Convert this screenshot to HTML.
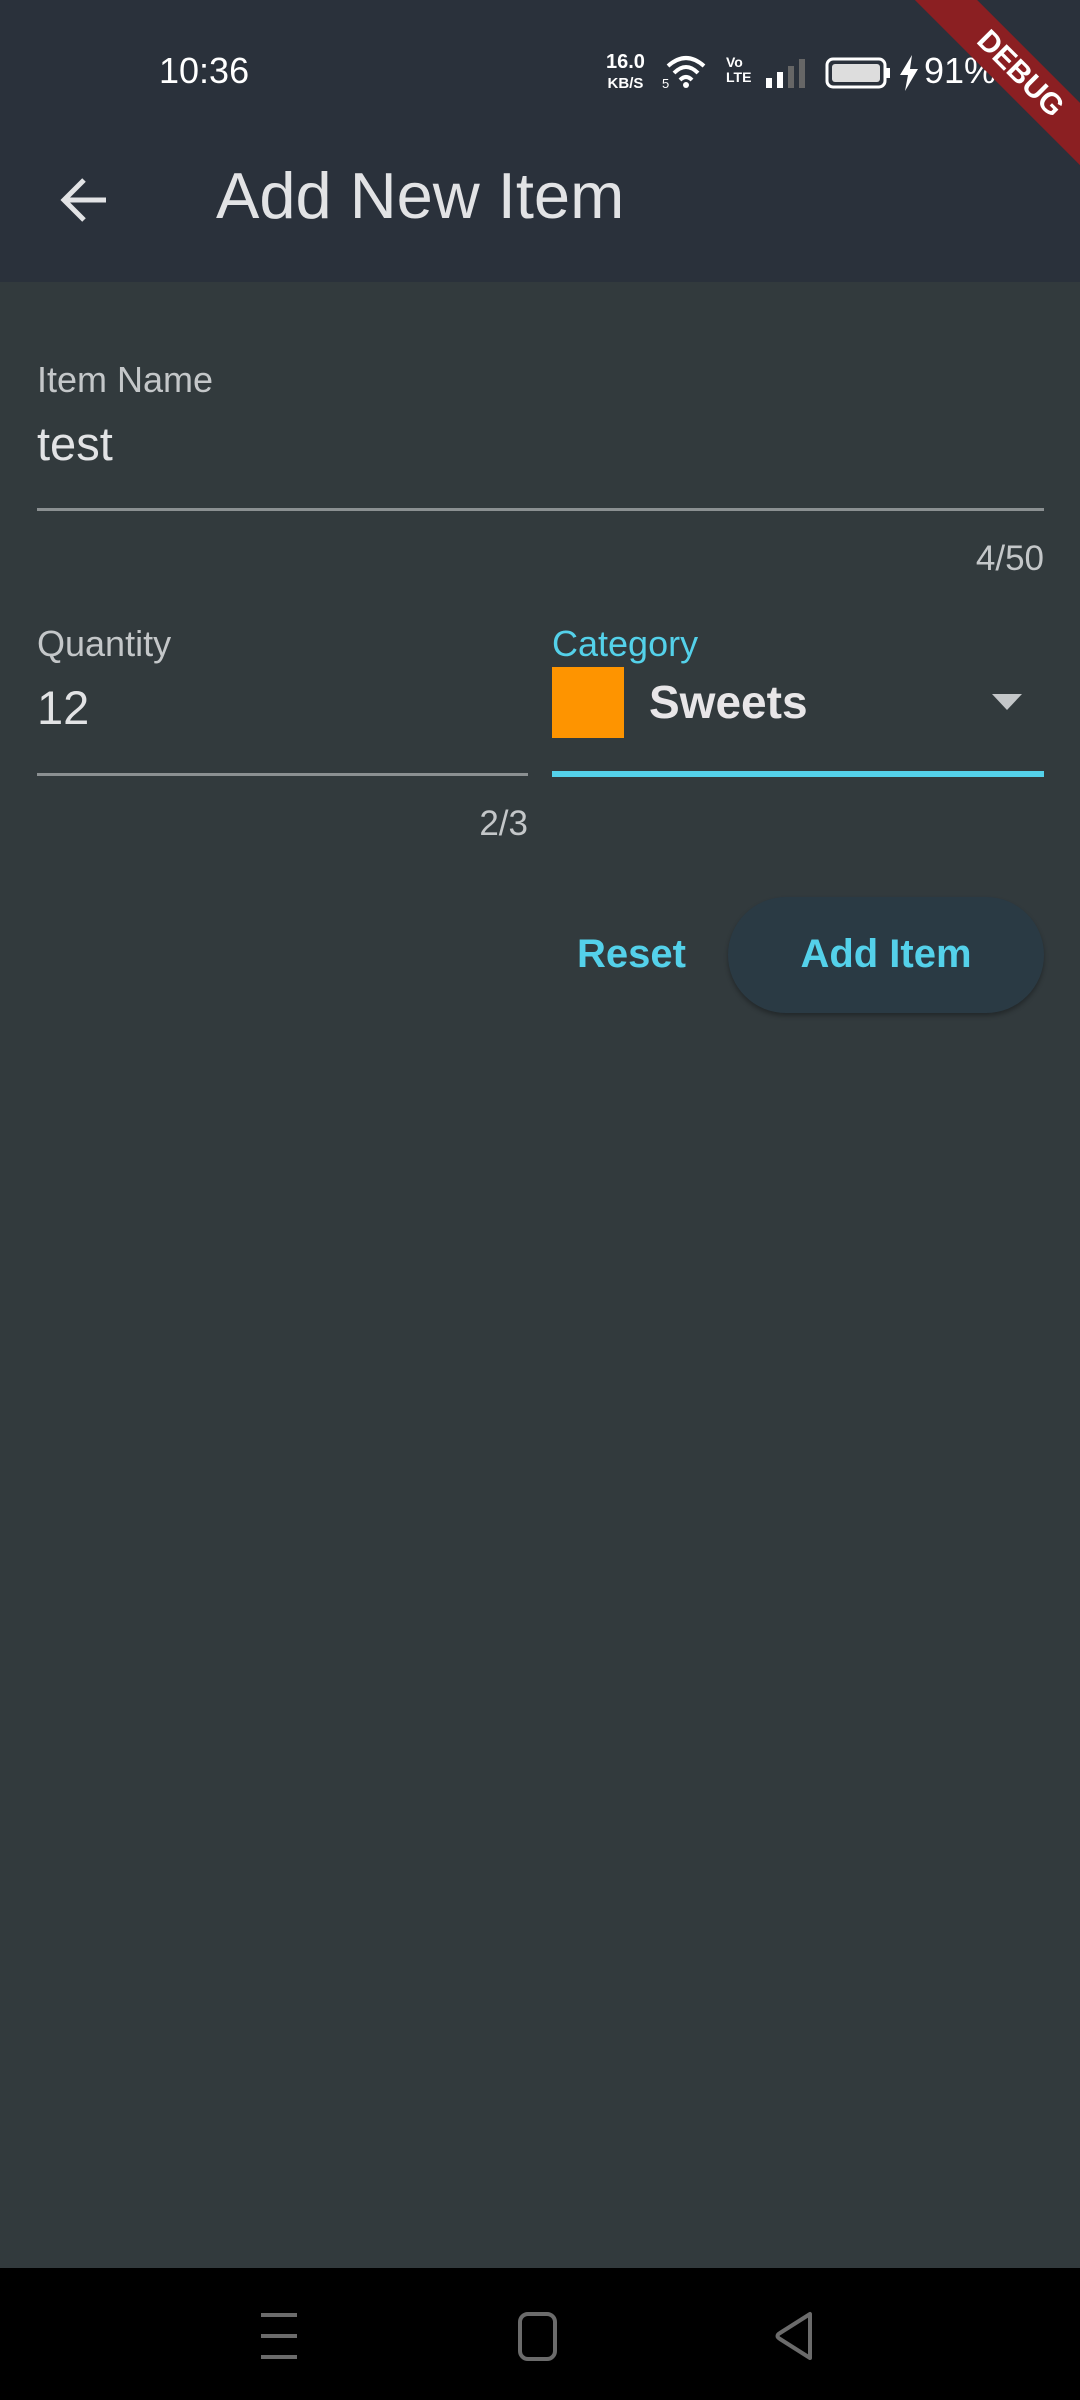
<!DOCTYPE html>
<html><head><meta charset="utf-8"><style>
*{margin:0;padding:0;box-sizing:border-box}
body{width:1080px;height:2400px;overflow:hidden;background:#323a3d;font-family:"Liberation Sans",sans-serif;position:relative;color:#e2e3e5}
.abs{position:absolute;white-space:nowrap}
#top{position:absolute;left:0;top:0;width:1080px;height:282px;background:#2a313b}
#nav{position:absolute;left:0;top:2268px;width:1080px;height:132px;background:#000}
</style></head><body>
<div id="top"></div>
<div class="abs" style="left:159px;top:50px;font-size:36px;color:#fff">10:36</div>
<div class="abs" style="left:606px;top:52px;font-size:20px;line-height:20px;color:#fff;font-weight:bold;text-align:center">16.0<br><span style="font-size:15px">KB/S</span></div>
<svg class="abs" style="left:662px;top:52px" width="52" height="38" viewBox="0 0 52 38"><path d="M6 14 Q24 -2 42 14" stroke="#fff" stroke-width="4" fill="none"/><path d="M12 21 Q24 9 36 21" stroke="#fff" stroke-width="4" fill="none"/><path d="M18 28 Q24 22 30 28" stroke="#fff" stroke-width="4" fill="none"/><circle cx="24" cy="33" r="3" fill="#fff"/><text x="0" y="36" font-size="13" fill="#fff" font-family="Liberation Sans">5</text></svg>
<div class="abs" style="left:726px;top:55px;font-size:14px;line-height:15px;color:#fff;font-weight:bold">Vo<br>LTE</div>
<svg class="abs" style="left:764px;top:56px" width="48" height="34"><rect x="2" y="22" width="6" height="10" fill="#fff"/><rect x="13" y="16" width="6" height="16" fill="#fff"/><rect x="24" y="10" width="6" height="22" fill="#666"/><rect x="35" y="3" width="6" height="29" fill="#666"/></svg>
<svg class="abs" style="left:825px;top:56px" width="70" height="34"><rect x="2" y="3" width="58" height="28" rx="6" fill="none" stroke="#fff" stroke-width="3"/><rect x="7" y="8" width="48" height="18" rx="3" fill="#ddd"/><rect x="61" y="12" width="4" height="10" fill="#fff"/></svg>
<svg class="abs" style="left:898px;top:55px" width="22" height="36"><path d="M14 0 L2 20 H10 L7 36 L20 14 H12 Z" fill="#fff"/></svg>
<div class="abs" style="left:924px;top:50px;font-size:36px;color:#fff">91%</div>
<div class="abs" style="left:860px;top:52px;width:320px;height:44px;background:#8b1f22;transform:rotate(45deg);color:#fff;font-weight:bold;font-size:30px;text-align:center;line-height:44px">DEBUG</div>
<svg class="abs" style="left:58px;top:176px" width="52" height="48" viewBox="0 0 52 48"><path d="M48 24 H6 M26 4 L6 24 L26 44" stroke="#e2e3e5" stroke-width="5" fill="none"/></svg>
<div class="abs" style="left:216px;top:158px;font-size:65px;color:#e2e3e5">Add New Item</div>

<div class="abs" style="left:37px;top:359px;font-size:36px;color:#c4c7c9">Item Name</div>
<div class="abs" style="left:37px;top:416px;font-size:47px;color:#e2e3e5">test</div>
<div class="abs" style="left:37px;top:508px;width:1007px;height:3px;background:#8b9092"></div>
<div class="abs" style="right:36px;top:539px;font-size:35px;color:#c4c7c9">4/50</div>

<div class="abs" style="left:37px;top:623px;font-size:36px;color:#c4c7c9">Quantity</div>
<div class="abs" style="left:37px;top:680px;font-size:47px;color:#e2e3e5">12</div>
<div class="abs" style="left:37px;top:773px;width:491px;height:3px;background:#8b9092"></div>
<div class="abs" style="right:552px;top:804px;font-size:35px;color:#c4c7c9">2/3</div>

<div class="abs" style="left:552px;top:623px;font-size:36px;color:#54d1ea">Category</div>
<div class="abs" style="left:552px;top:667px;width:72px;height:71px;background:#fe9400"></div>
<div class="abs" style="left:649px;top:675px;font-size:46px;font-weight:bold;color:#e8e6e8">Sweets</div>
<svg class="abs" style="left:992px;top:694px" width="30" height="16"><path d="M0 0 H30 L15 16 Z" fill="#c4c7c9"/></svg>
<div class="abs" style="left:552px;top:771px;width:492px;height:6px;background:#54d1ea"></div>

<div class="abs" style="left:577px;top:932px;font-size:40px;font-weight:bold;color:#54d1ea">Reset</div>
<div class="abs" style="left:728px;top:897px;width:316px;height:116px;border-radius:58px;background:#2a3a44;box-shadow:0 3px 5px rgba(0,0,0,.3)"></div>
<div class="abs" style="left:728px;top:932px;width:316px;text-align:center;font-size:40px;font-weight:bold;color:#54d1ea">Add Item</div>

<div id="nav"></div>
<svg class="abs" style="left:255px;top:2306px" width="580" height="60"><g stroke="#6b6b6b" stroke-width="4" fill="none"><path d="M6 9 H42 M6 30 H42 M6 51 H42"/><rect x="265" y="8" width="35" height="45" rx="8"/><path d="M555 8 L555 52 L525 33 Q520 30 525 27 Z" stroke-linejoin="round"/></g></svg>
</body></html>
